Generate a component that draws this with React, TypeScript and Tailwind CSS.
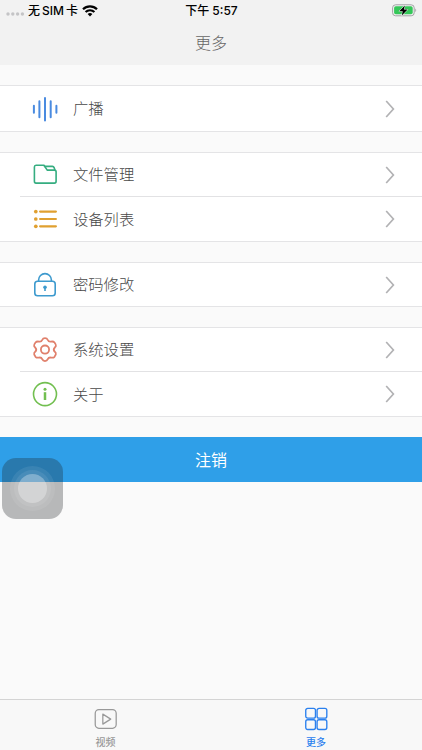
import { useState } from "react";
import type { ReactNode } from "react";

interface MenuItem {
  label: string;
  icon: ReactNode;
}

interface MenuGroup {
  height: string;
  items: MenuItem[];
}

const BroadcastIcon = () => (
  <svg width="26" height="26" viewBox="0 0 26 26" fill="none" stroke="#4a8be0" strokeWidth="2" strokeLinecap="round">
    <path d="M1.9 9.7v7.1M7.4 5.2v16M13 1.9v22.6M18.7 5.2v16M24.4 9.7v7.1" />
  </svg>
);

const FolderIcon = () => (
  <svg width="26" height="26" viewBox="0 0 26 26" fill="none" stroke="#35ad80" strokeWidth="1.6" strokeLinejoin="round" strokeLinecap="round">
    <path d="M4 3.2h8l3.2 4.9h7.2c1.1 0 1.7.6 1.7 1.7v9.5c0 1.1-.6 1.8-1.7 1.8H4c-1 0-1.6-.7-1.6-1.8V4.9c0-1 .6-1.7 1.6-1.7Z" />
    <path d="M12.6 4.4h7.8c.9 0 1.4.4 1.7 1.2l.8 2.4" />
  </svg>
);

const ListIcon = () => (
  <svg width="26" height="26" viewBox="0 0 26 26" fill="none" stroke="#e0a030" strokeWidth="2.2" strokeLinecap="round">
    <path d="M8.1 5.6h15.8M8.1 13h15.8M8.1 20.3h15.8" />
    <g fill="#e0a030" stroke="none">
      <circle cx="3.8" cy="5.6" r="1.85" />
      <circle cx="3.8" cy="13" r="1.85" />
      <circle cx="3.8" cy="20.3" r="1.85" />
    </g>
  </svg>
);

const LockIcon = () => (
  <svg width="26" height="26" viewBox="0 0 26 26" fill="none" stroke="#3d9ace" strokeWidth="1.6">
    <rect x="2.8" y="9.3" width="20.4" height="14.5" rx="2.8" />
    <path d="M6.6 9.2V8a6.4 6.4 0 0 1 12.8 0v1.2" />
    <circle cx="13" cy="15.2" r="1.8" fill="#3d9ace" stroke="none" />
    <path d="M13 15.5v3.4" strokeWidth="1.6" />
  </svg>
);

const GearIcon = () => (
  <svg width="26" height="26" viewBox="0 0.4 26 26" fill="none" stroke="#e0806c" strokeWidth="1.8" strokeLinejoin="round">
    <path d="M10.2 3.4C10.8 2 11.4 1.5 13 1.5s2.2.5 2.8 1.9c.6 1.4 1.7 1.9 3.2 1.6 1.8-.3 2.6-.2 3.5.9 1 1.3 1.6 2.4 1.4 3.3-.1.7-.5 1-1 1.5-1.4 1.4-1.4 3.2 0 4.6.5.5.9.9 1 1.5.2.9-.4 2.1-1.4 3.4-.9 1-1.7 1.1-3.5.8-1.5-.3-2.6.2-3.2 1.6-.6 1.4-1.2 1.9-2.8 1.9s-2.2-.5-2.8-1.9c-.6-1.4-1.7-1.9-3.2-1.6-1.8.3-2.6.2-3.5-.8-1-1.3-1.6-2.5-1.4-3.4.1-.6.5-1 1-1.5 1.4-1.4 1.4-3.2 0-4.6-.5-.5-.9-.8-1-1.5-.2-.9.4-2 1.4-3.3.9-1.1 1.7-1.2 3.5-.9 1.5.3 2.6-.2 3.2-1.6Z" />
    <circle cx="13" cy="13" r="4.1" />
  </svg>
);

const InfoIcon = () => (
  <svg width="26" height="26" viewBox="0 0 26 26" fill="none" stroke="#72bf50" strokeWidth="1.6">
    <circle cx="13" cy="13.1" r="11.5" />
    <path d="M13 11.2V19" strokeWidth="2.5" />
    <circle cx="13" cy="8.2" r="1.5" fill="#72bf50" stroke="none" />
  </svg>
);

const groups: MenuGroup[] = [
  { height: "h-[47px]", items: [{ label: "广播", icon: <BroadcastIcon /> }] },
  {
    height: "h-[90px]",
    items: [
      { label: "文件管理", icon: <FolderIcon /> },
      { label: "设备列表", icon: <ListIcon /> },
    ],
  },
  { height: "h-[45px]", items: [{ label: "密码修改", icon: <LockIcon /> }] },
  {
    height: "h-[90px]",
    items: [
      { label: "系统设置", icon: <GearIcon /> },
      { label: "关于", icon: <InfoIcon /> },
    ],
  },
];

const StatusBar = () => (
  <div className="flex h-[21px] items-center text-xs font-medium text-black">
    <div className="flex flex-1 items-center pl-[6px]">
      <svg width="19" height="6" viewBox="0 0 19 6" fill="#c4c4c6" className="mt-[6px]">
        <circle cx="2" cy="3" r="1.7" />
        <circle cx="6.8" cy="3" r="1.7" />
        <circle cx="11.6" cy="3" r="1.7" />
        <circle cx="16.4" cy="3" r="1.7" />
      </svg>
      <span className="ml-[3px] flex items-center gap-[2px] leading-5">
        <span className="pt-px">无</span>
        <span className="text-[12px]">SIM</span>
        <span className="pt-px">卡</span>
      </span>
      <svg width="16" height="12" viewBox="0 0 16 12" fill="none" stroke="#000" strokeWidth="2.2" className="ml-[4px]">
        <path d="M1 4.3a10 10 0 0 1 14 0M3.6 7.1a6.2 6.2 0 0 1 8.8 0" />
        <path d="M5.6 9.1a3.4 3.4 0 0 1 4.8 0L8 11.6Z" fill="#000" stroke="none" />
      </svg>
    </div>
    <span className="flex items-center gap-[3px] leading-5">
      <span className="pt-px">下午</span>
      <span className="text-[12px]">5:57</span>
    </span>
    <div className="flex flex-1 justify-end pr-[5px]">
      <svg width="25" height="13" viewBox="0 0 25 13">
        <rect x="0.6" y="0.8" width="21.6" height="11" rx="3" fill="none" stroke="#a2a2a4" strokeWidth="1" />
        <rect x="2.1" y="2.3" width="18.6" height="8" rx="1.7" fill="#35c759" />
        <path d="M23.3 4.6c1.2.5 1.2 2.9 0 3.4Z" fill="#a2a2a4" />
        <path d="M12.9 1.4 7.2 7.2h3.5l-.9 4.4 5.8-6h-3.7Z" fill="#000" stroke="#f3f3f3" strokeWidth="1" paintOrder="stroke" />
      </svg>
    </div>
  </div>
);

const MenuRow = ({ label, icon }: MenuItem) => (
  <button className="flex min-h-0 w-full flex-1 items-center pr-[27px] pl-8 text-left">
    {icon}
    <span className="ml-[15px] flex-1 pt-px text-[15.3px] leading-5 font-light text-[#484848]">{label}</span>
    <svg width="10" height="18" viewBox="0 0 10 18" fill="none" stroke="#b2b2b4" strokeWidth="1.7">
      <path d="m1.2 1 7.2 8-7.2 8" />
    </svg>
  </button>
);

const AssistiveTouch = () => (
  <div className="absolute top-[457.5px] left-[2px] flex size-[61px] items-center justify-center rounded-[14px] bg-[#1e2026]/30">
    <div className="flex size-[45px] items-center justify-center rounded-full bg-white/8">
      <div className="flex size-[37px] items-center justify-center rounded-full bg-white/8">
        <div className="size-[29px] rounded-full bg-white/30" />
      </div>
    </div>
  </div>
);

const App = () => {
  const [tab, setTab] = useState("more");

  return (
    <div className="relative flex h-[750px] w-full flex-col overflow-hidden bg-[#fafafa] font-['Inter','Noto_Sans_CJK_SC',sans-serif]">
      <header className="h-[65px] shrink-0 bg-[#f2f2f2]">
        <StatusBar />
        <h1 className="pt-[10px] text-center text-base leading-6 font-light text-[#666]">更多</h1>
      </header>

      <main className="flex flex-1 flex-col gap-5 pt-5">
        {groups.map((group) => (
          <section
            key={group.items[0].label}
            className={`flex flex-col border-y border-[#e4e4e6] bg-white ${group.height}`}
          >
            {group.items.map((item, index) => (
              <div
                key={item.label}
                className={`flex min-h-0 flex-col ${group.items.length > 1 && index === 0 ? "h-[43px]" : "flex-1"}`}
              >
                {index > 0 && <div className="ml-5 h-px shrink-0 bg-[#e2e2e4]" />}
                <MenuRow {...item} />
              </div>
            ))}
          </section>
        ))}
        <button className="h-[45px] w-full bg-[#2f9fe8] pt-px text-base leading-6 text-white">注销</button>
      </main>

      {/* Bottom tabs */}
      <nav className="flex h-[51px] shrink-0 border-t border-[#d4d4d4] bg-[#f8f8f8] text-[10px] font-medium">
        <button
          onClick={() => setTab("video")}
          className={`flex flex-1 flex-col items-center pt-[7px] ${tab === "video" ? "text-[#2b80ee]" : "text-[#999]"}`}
        >
          <svg width="26" height="26" viewBox="0 0 26 26" fill="none" stroke="currentColor" strokeWidth="1.3" strokeLinejoin="round">
            <rect x="1.8" y="2.7" width="21.8" height="19.4" rx="3.8" />
            <path d="M9.7 7.4v10.4l8.2-5.2Z" />
          </svg>
          <span className="mt-[2px] leading-4">视频</span>
        </button>
        <button
          onClick={() => setTab("more")}
          className={`flex flex-1 flex-col items-center pt-[7px] ${tab === "more" ? "text-[#2b80ee]" : "text-[#999]"}`}
        >
          <svg width="26" height="26" viewBox="0 0 26 26" fill="none" stroke="currentColor" strokeWidth="1.4">
            <rect x="1.3" y="1.5" width="10.1" height="10.1" rx="2" />
            <rect x="13.1" y="1.5" width="10.1" height="10.1" rx="2" />
            <rect x="1.3" y="13.3" width="10.1" height="10.1" rx="2" />
            <rect x="13.1" y="13.3" width="10.1" height="10.1" rx="2" />
          </svg>
          <span className="mt-[2px] mr-px leading-4">更多</span>
        </button>
      </nav>

      <AssistiveTouch />
    </div>
  );
};

export default App;
